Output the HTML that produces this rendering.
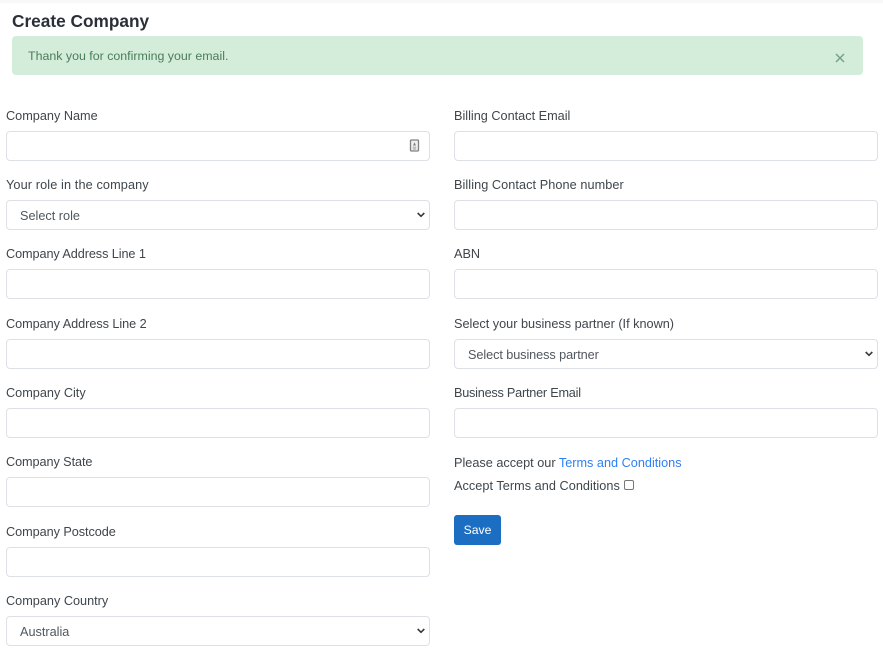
<!DOCTYPE html>
<html><head><meta charset="utf-8"><style>
html,body{margin:0;padding:0;background:#fff;width:883px;height:653px;overflow:hidden}
body{position:relative;font-family:"Liberation Sans",sans-serif;color:#3f464c}
#w{position:absolute;left:0;top:0;width:883px;height:653px;filter:blur(.3px)}
.t{position:absolute;font-size:12.7px;line-height:18px;white-space:nowrap}
.i{position:absolute;width:424px;height:30px;box-sizing:border-box;border:1px solid #dde0e5;border-radius:4px;background:#fff}
.s{font-size:12.7px;line-height:30px;padding-left:13px;color:#50575d}
.s svg{position:absolute;right:3px;top:10px}
</style></head><body><div id="w">
<div style="position:absolute;left:0;top:0;width:883px;height:3px;background:#f8f8f8"></div>
<div class="t" style="left:12px;top:9px;font-size:17.25px;line-height:24px;font-weight:bold;color:#2b3038">Create Company</div>
<div style="position:absolute;left:12px;top:36px;width:851px;height:39px;background:#d4ecda;border-radius:4px"></div>
<div class="t" style="left:28px;top:47px;color:#4a7d5c;font-size:12.4px">Thank you for confirming your email.</div>
<svg style="position:absolute;left:835px;top:53px" width="10" height="10" viewBox="0 0 10 10"><path d="M1 1L9 9M9 1L1 9" stroke="#76a287" stroke-width="1.5" fill="none"/></svg>

<div class="t" style="left:6px;top:106.5px">Company Name</div>
<div class="i" style="left:6px;top:131px"></div>
<svg style="position:absolute;left:409px;top:139px" width="11" height="13" viewBox="0 0 11 13"><rect x="1.5" y="1" width="8" height="11" rx="1" fill="#f0f0f0" stroke="#808080" stroke-width="1.3"/><path d="M5.5 3.2L7 6.5H4Z" fill="#808080"/><path d="M3.8 8.2h3.4M3.8 10h3.4" stroke="#999" stroke-width=".9" fill="none"/></svg>

<div class="t" style="left:6px;top:176px;letter-spacing:.12px">Your role in the company</div>
<div class="i s" style="left:6px;top:200px">Select role<svg width="10" height="8" viewBox="0 0 10 8"><path d="M1.7 2L5 5.3L8.3 2" stroke="#343a40" stroke-width="1.6" fill="none"/></svg></div>

<div class="t" style="left:6px;top:245px;letter-spacing:-.09px">Company Address Line 1</div>
<div class="i" style="left:6px;top:269px"></div>

<div class="t" style="left:6px;top:315px;letter-spacing:-.05px">Company Address Line 2</div>
<div class="i" style="left:6px;top:339px"></div>

<div class="t" style="left:6px;top:384px">Company City</div>
<div class="i" style="left:6px;top:408px"></div>

<div class="t" style="left:6px;top:453px;letter-spacing:-.08px">Company State</div>
<div class="i" style="left:6px;top:477px"></div>

<div class="t" style="left:6px;top:523px;letter-spacing:-.06px">Company Postcode</div>
<div class="i" style="left:6px;top:547px"></div>

<div class="t" style="left:6px;top:592px">Company Country</div>
<div class="i s" style="left:6px;top:616px">Australia<svg width="10" height="8" viewBox="0 0 10 8"><path d="M1.7 2L5 5.3L8.3 2" stroke="#343a40" stroke-width="1.6" fill="none"/></svg></div>

<div class="t" style="left:454px;top:107px">Billing Contact Email</div>
<div class="i" style="left:454px;top:131px"></div>

<div class="t" style="left:454px;top:176px;letter-spacing:.07px">Billing Contact Phone number</div>
<div class="i" style="left:454px;top:200px"></div>

<div class="t" style="left:454px;top:245px">ABN</div>
<div class="i" style="left:454px;top:269px"></div>

<div class="t" style="left:454px;top:315px">Select your business partner (If known)</div>
<div class="i s" style="left:454px;top:339px"><span style="letter-spacing:-.08px">Select business partner</span><svg width="10" height="8" viewBox="0 0 10 8"><path d="M1.7 2L5 5.3L8.3 2" stroke="#343a40" stroke-width="1.6" fill="none"/></svg></div>

<div class="t" style="left:454px;top:384px;letter-spacing:-.23px">Business Partner Email</div>
<div class="i" style="left:454px;top:408px"></div>

<div class="t" style="left:454px;top:454px">Please accept our <a style="color:#2f80f5;text-decoration:none">Terms and Conditions</a></div>
<div class="t" style="left:454px;top:477px;letter-spacing:.04px">Accept Terms and Conditions</div>
<div style="position:absolute;left:624px;top:480px;width:10px;height:10px;box-sizing:border-box;border:1px solid #777;border-radius:2px;background:#fff"></div>

<div class="t" style="left:454px;top:515px;width:47px;height:30px;background:#1b6ec2;border-radius:3px;color:#fff;text-align:center;line-height:31px;font-size:12.2px">Save</div>
</div></body></html>
